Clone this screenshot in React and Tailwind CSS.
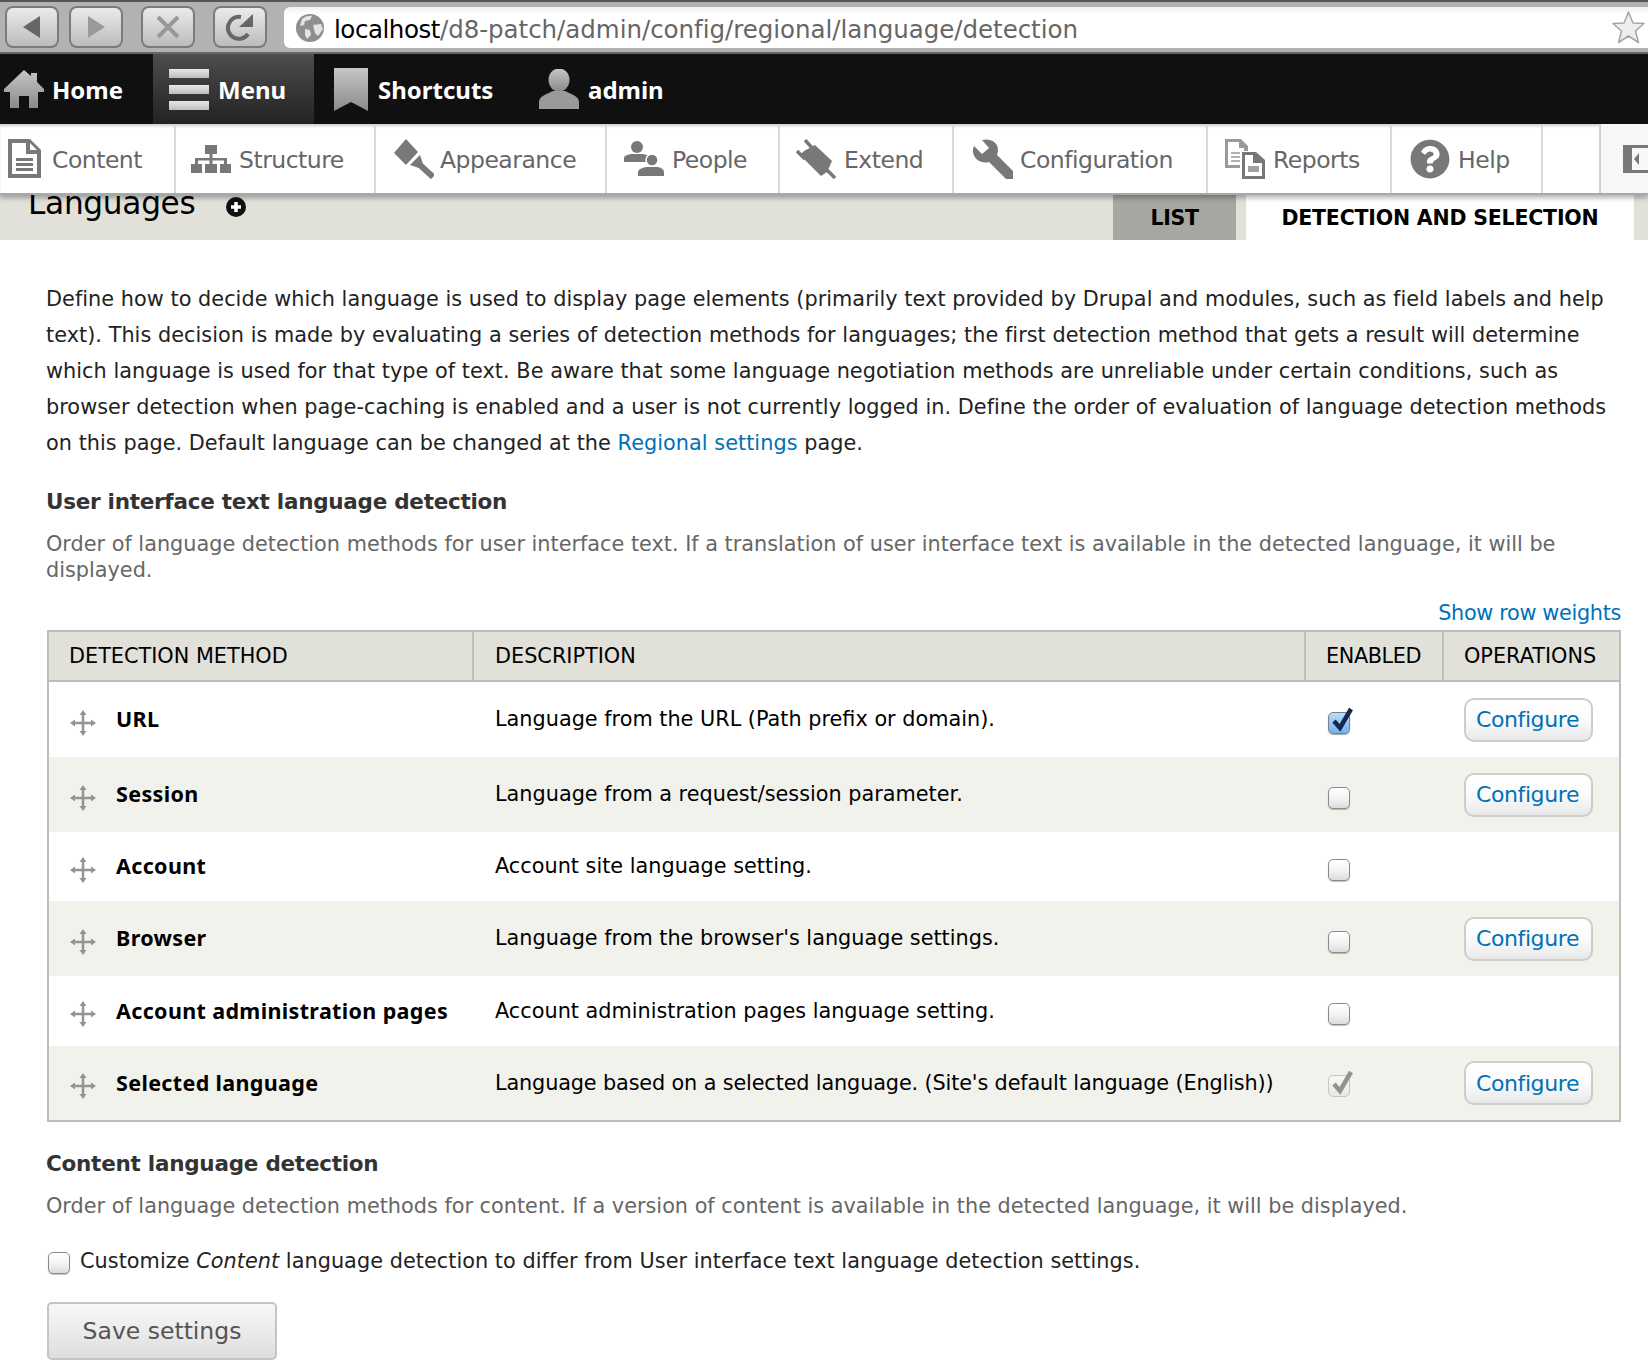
import React from "react";
import { FaQuestionCircle } from "react-icons/fa";

const F = "[font-family:'DejaVu_Sans',sans-serif]";
const BOLD = "[font-family:'Noto_Sans',sans-serif] font-bold";

function Checkbox({ state }) {
  if (state === "on")
    return (
      <span className="relative block w-[22px] h-[22px] rounded-[5px] border border-[#7a7f8c] bg-gradient-to-b from-[#bcdcfb] to-[#6fb2f3] shadow-[0_1px_1px_rgba(0,0,0,.35)]">
        <svg className="absolute -top-[7px] left-[2px]" width="23" height="27" viewBox="0 0 23 27">
          <path d="M3 15L9 22L20 3" fill="none" stroke="#12294d" strokeWidth="4.5" />
        </svg>
      </span>
    );
  if (state === "dis")
    return (
      <span className="relative block w-[22px] h-[22px] rounded-[5px] border border-[#c4c4c0] bg-gradient-to-b from-[#f7f7f5] to-[#e8e8e4]">
        <svg className="absolute -top-[7px] left-[2px]" width="23" height="27" viewBox="0 0 23 27">
          <path d="M3 15L9 22L20 3" fill="none" stroke="#94948f" strokeWidth="4.5" />
        </svg>
      </span>
    );
  return (
    <span className="block w-[22px] h-[22px] rounded-[5px] border border-[#8a8a8a] bg-gradient-to-b from-[#ffffff] via-[#f4f4f4] to-[#dcdcdc] shadow-[0_1px_1px_rgba(0,0,0,.25)]" />
  );
}

function Drag() {
  return (
    <svg width="26" height="26" viewBox="0 0 26 26" className="block">
      <path d="M13 4V22M4 13H22" stroke="#939393" strokeWidth="2.5" fill="none" />
      <path d="M13 0L16.5 5H9.5ZM13 26L16.5 21H9.5ZM0 13L5 9.5V16.5ZM26 13L21 9.5V16.5Z" fill="#939393" />
    </svg>
  );
}

function Configure() {
  return (
    <a className="flex items-center justify-center w-[129px] h-[44px] pr-[2px] border-2 border-[#cdcdca] rounded-[10px] bg-gradient-to-b from-[#ffffff] via-[#fbfbfb] to-[#e8e8e8] text-[#0071b8] text-[22px] tracking-[-0.4px]">
      Configure
    </a>
  );
}

const rows = [
  { name: "URL", desc: "Language from the URL (Path prefix or domain).", h: "h-[75px]", cb: "on", cfg: true },
  { name: "Session", desc: "Language from a request/session parameter.", h: "h-[75px]", bg: "bg-[#f2f2ed]", cb: "off", cfg: true },
  { name: "Account", desc: "Account site language setting.", h: "h-[69px]", cb: "off" },
  { name: "Browser", desc: "Language from the browser's language settings.", h: "h-[75px]", bg: "bg-[#f2f2ed]", cb: "off", cfg: true },
  { name: "Account administration pages", desc: "Account administration pages language setting.", h: "h-[70px]", cb: "off" },
  { name: "Selected language", desc: "Language based on a selected language. (Site's default language (English))", h: "h-[74px]", bg: "bg-[#f2f2ed]", cb: "dis", cfg: true, tight: true },
];

const grey = "#787878";
const navItems = [
  { label: "Content", w: "w-[176px]", pl: "pl-[8px]", gap: "gap-[11px]", icon: (
    <svg width="33" height="39" viewBox="0 0 33 39">
      <path fillRule="evenodd" fill={grey} d="M0 0H22L33 11V39H0ZM4 4V35H29V15H18V4ZM22 4V11H29Z" />
      <path fill={grey} d="M8 19H25V22H8ZM8 24H25V27H8ZM8 29H25V32H8Z" />
    </svg>) },
  { label: "Structure", w: "w-[200px]", pl: "pl-[15px]", gap: "gap-[8px]", icon: (
    <svg width="40" height="28" viewBox="0 0 40 28">
      <path fill={grey} d="M14 0H26V9H21.5V13H36V19H40V28H29V19H33V15.5H21.5V19H26V28H14V19H18.5V15.5H7V19H11V28H0V19H4V13H18.5V9H14Z" />
    </svg>) },
  { label: "Appearance", w: "w-[231px]", pl: "pl-[18px]", gap: "gap-[6px]", icon: (
    <svg width="40" height="40" viewBox="0 0 40 40">
      <path fill={grey} d="M0 14L12 0L24 13L12 26Z" />
      <path fill={grey} d="M16 26L26 16L29 25L25 29Z" />
      <path stroke={grey} strokeWidth="6" d="M26 26L39 38" />
    </svg>) },
  { label: "People", w: "w-[173px]", pl: "pl-[17px]", gap: "gap-[8px]", icon: (
    <svg width="40" height="35" viewBox="0 0 40 35">
      <circle cx="13" cy="6" r="6" fill={grey} />
      <path fill={grey} d="M0 21V17C0 14 6 13 9 13H17C20 13 26 14 26 17V21Z" />
      <circle cx="28" cy="19" r="6" fill={grey} stroke="#fff" strokeWidth="1.5" />
      <path fill={grey} d="M14 35V31C14 28 20 26 24 26H32C36 26 40 28 40 31V35Z" />
    </svg>) },
  { label: "Extend", w: "w-[174px]", pl: "pl-[16px]", gap: "gap-[8px]", icon: (
    <svg width="40" height="40" viewBox="0 0 40 40">
      <path stroke={grey} strokeWidth="3.5" d="M9 1L18 11M1 12L9 20M28 28L39 39" />
      <path fill={grey} d="M19 6L36 22L31 33L25 37L4 16L8 12Z" />
    </svg>) },
  { label: "Configuration", w: "w-[254px]", pl: "pl-[19px]", gap: "gap-[7px]", icon: (
    <svg width="40" height="40" viewBox="0 0 40 40">
      <path fill={grey} d="M9 1C17 -1 25 3 25 11C25 13 24 15 24 16L40 32V40H33L16 23C9 25 1 21 0 13C0 11 0 9 1 7L9 15L16 9Z" />
    </svg>) },
  { label: "Reports", w: "w-[184px]", pl: "pl-[17px]", gap: "gap-[8px]", icon: (
    <svg width="40" height="40" viewBox="0 0 40 40">
      <path fillRule="evenodd" fill="#9a9a9a" d="M0 0H16L23 7V12H19V9H14V3H3V26H15V29H0Z" />
      <path fill="#b0b0b0" d="M6 13H15V15H6ZM6 17H15V19H6ZM6 21H15V23H6Z" />
      <path fillRule="evenodd" fill={grey} d="M17 13H31L40 21V40H17ZM20 16V37H37V24H28V16Z" />
      <path fill="#a0a0a0" d="M23 27H34V33H23Z" />
    </svg>) },
  { label: "Help", w: "w-[151px]", pl: "pl-[18px]", gap: "gap-[8px]", icon: <FaQuestionCircle size={40} color={grey} /> },
];

const darkBtn = "flex items-center justify-center w-[54px] h-[42px] rounded-[8px] border-2 border-[#7b7b7b] bg-gradient-to-b from-[#ebebeb] to-[#bcbcbc]";

export default function App() {
  return (
    <div className={`w-[1648px] h-[1364px] overflow-hidden bg-white text-[#222] text-[20.8px] ${F}`}>
      {/* Browser chrome */}
      <div className="flex items-start h-[54px] pt-[4px] pl-[5px] bg-[#b2b2b2] border-t-2 border-b-2 border-t-[#555] border-b-[#666]">
        <div className="flex">
          <div className={darkBtn}>
            <svg width="18" height="22" viewBox="0 0 18 22"><path d="M0 11L17 0V22Z" fill="#666" /></svg>
          </div>
          <div className={`${darkBtn} ml-[10px]`}>
            <svg width="18" height="22" viewBox="0 0 18 22"><path d="M18 11L1 0V22Z" fill="#999" /></svg>
          </div>
          <div className={`${darkBtn} ml-[18px]`}>
            <svg width="24" height="24" viewBox="0 0 24 24"><path d="M2 2L22 22M22 2L2 22" stroke="#999" strokeWidth="4" /></svg>
          </div>
          <div className={`${darkBtn} ml-[18px]`}>
            <svg width="28" height="28" viewBox="0 0 28 28"><path d="M22 21A11 11 0 1 1 15 4" fill="none" stroke="#666" strokeWidth="4" /><path d="M13 14L27 1V14Z" fill="#666" /></svg>
          </div>
          <div className="flex items-center ml-[17px] mt-px w-[1364px] h-[41px] bg-gradient-to-b from-[#f1f1f1] to-[#ffffff] to-[20%] rounded-l-[6px]">
            <svg className="ml-[12px]" width="28" height="28" viewBox="0 0 28 28">
              <circle cx="14" cy="14" r="14" fill="#8f8f8f" />
              <path fill="#e4e4e4" d="M6 5C9 2 14 1 16 2L14 6L9 7L8 11L4 12ZM17 11L25 10L27 15L22 22L19 19ZM9 15L14 16L15 21L11 25L9 21Z" />
            </svg>
            <div className="ml-[10px] pt-[5px] text-[24.5px] tracking-[-0.03px] text-[#666]"><span className="text-black tracking-[-0.45px]">localhost</span>/d8-patch/admin/config/regional/language/detection</div>
            <svg className="ml-auto mr-[3px]" width="33" height="33" viewBox="0 0 33 33">
              <path d="M16.5 1L21 12L32 12.5L23.5 20L26.5 31.5L16.5 25L6.5 31.5L9.5 20L1 12.5L12 12Z" fill="#eeeeee" stroke="#a5a5a5" strokeWidth="1.5" strokeLinejoin="round" />
            </svg>
          </div>
        </div>
      </div>

      {/* Admin toolbar */}
      <div className={`flex h-[70px] bg-[#101010] text-white text-[24px] ${BOLD}`}>
        <div className="flex items-center w-[153px] pl-[4px] gap-[8px]">
          <svg width="40" height="38" viewBox="0 0 40 38">
            <defs>
              <linearGradient id="dg" x1="0" x2="0" y1="0" y2="1"><stop offset="0" stopColor="#c6c6c6" /><stop offset="1" stopColor="#8a8a8a" /></linearGradient>
              <linearGradient id="bar" x1="0" x2="0" y1="0" y2="1"><stop offset="0" stopColor="#e8e8e8" /><stop offset="1" stopColor="#bdbdbd" /></linearGradient>
            </defs>
            <path fill="url(#dg)" d="M20 0L27 6V3H33V12L40 19V22H34V38H25V26H15V38H6V22H0V19Z" />
          </svg>
          <span className="mt-[1px]">Home</span>
        </div>
        <div className="flex items-center w-[161px] pl-[16px] gap-[9px] bg-gradient-to-b from-[#4d4d4d] to-[#232323]">
          <svg width="40" height="41" viewBox="0 0 40 41">
            <rect y="0" width="40" height="9" fill="url(#bar)" />
            <rect y="16" width="40" height="9" fill="url(#bar)" />
            <rect y="32" width="40" height="9" fill="url(#bar)" />
          </svg>
          <span className="mt-[1px]">Menu</span>
        </div>
        <div className="flex items-center w-[206px] pl-[20px] gap-[10px]">
          <svg width="34" height="43" viewBox="0 0 34 43"><path fill="url(#dg)" d="M0 0H34V43L17 34L0 43Z" /></svg>
          <span className="mt-[1px]">Shortcuts</span>
        </div>
        <div className="flex items-center pl-[19px] gap-[9px]">
          <svg width="40" height="40" viewBox="0 0 40 40">
            <ellipse cx="20" cy="11" rx="10.5" ry="11.5" fill="url(#dg)" />
            <path fill="#9a9a9a" d="M0 40V33C0 27 8 25 14 22H26C32 25 40 27 40 33V40Z" />
          </svg>
          <span className="mt-[1px]">admin</span>
        </div>
      </div>

      {/* Admin tray */}
      <div className="relative z-10 flex h-[71px] bg-white border-b-2 border-[#a9a9a9] shadow-[0_3px_5px_rgba(0,0,0,.3),inset_0_3px_3px_-1px_rgba(0,0,0,.2)] text-[#666] text-[23.5px] tracking-[-0.5px]">
        {navItems.map((n) => (
          <div key={n.label} className={`flex items-center ${n.w} ${n.pl} ${n.gap} border-r-2 border-[#d8d8d8]`}>
            {n.icon}
            <span className="mt-[4px]">{n.label}</span>
          </div>
        ))}
        <div className="w-[58px] border-r-2 border-[#d0d0d0]" />
        <div className="flex-1 flex items-center justify-end bg-[#f7f7f7]">
          <svg width="25" height="28" viewBox="0 0 25 28">
            <path fillRule="evenodd" fill={grey} d="M0 0H25V28H0ZM9 3V25H25V3Z" />
            <path fill={grey} d="M16 8L11 14L16 20Z" />
          </svg>
        </div>
      </div>

      {/* Page header */}
      <div className="flex h-[45px] bg-[#e1e1da] overflow-hidden">
        <div className="flex items-start flex-1 pl-[28px]">
          <h1 className="text-[31.2px] text-black -mt-[15px] leading-[46px] tracking-[-0.3px]">Languages</h1>
          <svg className="ml-[31px] mt-[2px]" width="20" height="20" viewBox="0 0 20 20">
            <circle cx="10" cy="10" r="10" fill="#111" />
            <path d="M10 5V15M5 10H15" stroke="#fff" strokeWidth="3.5" />
          </svg>
        </div>
        <div className="flex items-center justify-center w-[123px] pt-[2px] bg-[#a7a7a1] text-black font-bold text-[20.5px] tracking-[-0.3px]">LIST</div>
        <div className="flex items-center justify-center w-[388px] ml-[10px] mr-[14px] pt-[2px] bg-white text-black font-bold text-[20.5px] tracking-[-0.2px]">DETECTION AND SELECTION</div>
      </div>

      {/* Content */}
      <div className="pl-[46px] pr-[27px] pt-[41px]">
        <p className="leading-[36px] tracking-[0.04px]">
          Define how to decide which language is used to display page elements (primarily text provided by Drupal and modules, such as field labels and help text). This decision is made by evaluating a series of detection methods for languages; the first detection method that gets a result will determine which language is used for that type of text. Be aware that some language negotiation methods are unreliable under certain conditions, such as browser detection when page-caching is enabled and a user is not currently logged in. Define the order of evaluation of language detection methods on this page. Default language can be changed at the <a className="text-[#0071b8]">Regional settings</a> page.
        </p>
        <h2 className="mt-[24px] font-bold text-[#333] text-[21.5px] leading-[34px] tracking-[-0.27px]">User interface text language detection</h2>
        <p className="mt-[12px] text-[#666] leading-[26px]">Order of language detection methods for user interface text. If a translation of user interface text is available in the detected language, it will be displayed.</p>
        <div className="mt-[17px] text-right text-[#0071b8] leading-[26px] tracking-[-0.33px]">Show row weights</div>
        <div className="mt-[4px] ml-px border-2 border-[#bfbfb9]">
          <table className="w-full table-fixed border-separate border-spacing-0">
            <colgroup>
              <col className="w-[425px]" />
              <col className="w-[832px]" />
              <col className="w-[138px]" />
              <col />
            </colgroup>
            <thead>
              <tr className="h-[50px] bg-[#e1e1da] text-black text-left">
                <th className="font-normal pl-[20px] pt-[2px] border-b-2 border-r-2 border-[#bfbfb9]">DETECTION METHOD</th>
                <th className="font-normal pl-[21px] pt-[2px] border-b-2 border-r-2 border-[#bfbfb9]">DESCRIPTION</th>
                <th className="font-normal pl-[20px] pt-[2px] border-b-2 border-r-2 border-[#bfbfb9] tracking-[-0.4px]">ENABLED</th>
                <th className="font-normal pl-[20px] pt-[2px] border-b-2 border-[#bfbfb9]">OPERATIONS</th>
              </tr>
            </thead>
            <tbody>
              {rows.map((r) => (
                <tr key={r.name} className={`${r.h} ${r.bg || ""} text-black`}>
                  <td className="pl-[21px]">
                    <div className="flex items-center">
                      <span className="mt-[6px]"><Drag /></span>
                      <span className={`ml-[20px] text-[21.5px] tracking-[0.35px] ${BOLD}`}>{r.name}</span>
                    </div>
                  </td>
                  <td className={`pl-[21px] pt-px ${r.tight ? "tracking-[-0.14px]" : ""}`}>{r.desc}</td>
                  <td className="pl-[22px]"><span className="block mt-[6px]"><Checkbox state={r.cb} /></span></td>
                  <td className="pl-[20px]">{r.cfg && <Configure />}</td>
                </tr>
              ))}
            </tbody>
          </table>
        </div>
        <h2 className="mt-[25px] font-bold text-[#333] text-[21.5px] leading-[34px] tracking-[-0.25px]">Content language detection</h2>
        <p className="mt-[12px] text-[#666] leading-[26px]">Order of language detection methods for content. If a version of content is available in the detected language, it will be displayed.</p>
        <div className="mt-[29px] flex items-center">
          <span className="ml-[2px] mt-[3px]"><Checkbox state="off" /></span>
          <span className="ml-[10px] leading-[26px] tracking-[0.04px]">Customize <em>Content</em> language detection to differ from User interface text language detection settings.</span>
        </div>
        <button className="block mt-[28px] ml-px w-[230px] h-[58px] pt-px rounded-[5px] border-2 border-[#c5c5c5] bg-gradient-to-b from-[#f8f8f8] to-[#dedede] text-[#555] text-[23.5px]">Save settings</button>
      </div>
    </div>
  );
}
